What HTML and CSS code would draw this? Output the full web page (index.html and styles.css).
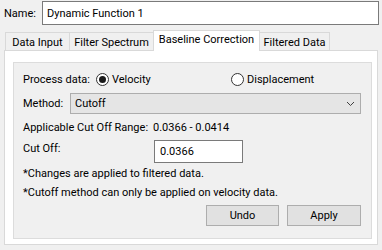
FILE: index.html
```html
<!DOCTYPE html>
<html lang="en">
<head>
    <meta charset="UTF-8">
    <title>Dynamic Function</title>
    <link rel="stylesheet" href="styles.css">
</head>
<body>
    <div class="name-row">
        <span class="name-label">Name:</span>
        <div class="textbox name-box">Dynamic Function 1</div>
    </div>

    <div class="tabs">
        <div class="tab tab-input">Data Input</div>
        <div class="tab tab-spectrum">Filter Spectrum</div>
        <div class="tab tab-baseline active">Baseline Correction</div>
        <div class="tab tab-filtered">Filtered Data</div>
    </div>

    <div class="tab-page">
        <div class="group">
            <div class="row process-row">
                <span class="label process-label">Process data:</span>
                <span class="radio first-radio"><span class="dot checked"></span>Velocity</span>
                <span class="radio"><span class="dot"></span>Displacement</span>
            </div>
            <div class="row method-row">
                <span class="label method-label">Method:</span>
                <div class="combo">
                    <span>Cutoff</span>
                    <svg width="9" height="6" viewBox="0 0 9 6"><polyline points="1,1 4.5,4.5 8,1" fill="none" stroke="#404040" stroke-width="1"/></svg>
                </div>
            </div>
            <div class="row range-row">
                <span class="label range-label">Applicable Cut Off Range:</span>
                <span>0.0366 - 0.0414</span>
            </div>
            <div class="row cutoff-row">
                <span class="label cutoff-label">Cut Off:</span>
                <div class="textbox cutoff-box">0.0366</div>
            </div>
            <p class="note note-first">*Changes are applied to filtered data.</p>
            <p class="note">*Cutoff method can only be applied on velocity data.</p>
            <div class="buttons">
                <button class="btn undo">Undo</button>
                <button class="btn apply">Apply</button>
            </div>
        </div>
    </div>
</body>
</html>
```

FILE: styles.css
```css
body {
    margin: 0;
    width: 382px;
    height: 250px;
    overflow: hidden;
    background-color: #f0f0f0;
    font-family: Roboto, "Liberation Sans", sans-serif;
    font-size: 11px;
    color: #000;
}

.name-row {
    display: flex;
    align-items: center;
    padding: 1px 3px 0 4px;
}

.name-label {
    width: 38px;
}

.textbox {
    box-sizing: border-box;
    background: #fff;
    border: 1px solid #7a7a7a;
    display: flex;
    align-items: center;
}

.name-box {
    flex: 1;
    height: 24px;
    padding-left: 4px;
}

.tabs {
    display: flex;
    align-items: flex-end;
    height: 20px;
    margin: 5px 0 0 5px;
}

.tab {
    box-sizing: border-box;
    height: 18px;
    line-height: 16px;
    padding-top: 2px;
    text-align: center;
    border: 1px solid #d9d9d9;
    border-bottom: none;
    margin-right: -1px;
    background: #f0f0f0;
    white-space: nowrap;
}

.tab.active {
    height: 21px;
    padding-top: 1px;
    background: #fff;
    position: relative;
    z-index: 1;
    margin-bottom: -1px;
}

.tab-input { width: 65px; }
.tab-spectrum { width: 85px; }
.tab-baseline { width: 107px; }
.tab-filtered { width: 71px; }

.tab-page {
    box-sizing: border-box;
    margin: 0 4px 0 4px;
    width: 374px;
    height: 195px;
    border: 1px solid #d9d9d9;
    background: #fff;
    padding: 11px 5px 5px 8px;
}

.group {
    box-sizing: border-box;
    height: 100%;
    border: 1px solid #dcdcdc;
    background: #f0f0f0;
    padding: 0 10px 0 9px;
}

.row {
    display: flex;
    align-items: center;
    white-space: nowrap;
}

.process-row {
    height: 16px;
    margin-top: 8px;
}

.process-label {
    width: 73px;
}

.radio {
    display: flex;
    align-items: center;
}

.first-radio {
    width: 135px;
}

.dot {
    box-sizing: border-box;
    width: 13px;
    height: 13px;
    border: 1px solid #333;
    border-radius: 50%;
    background: #fff;
    margin-right: 3px;
    display: flex;
    align-items: center;
    justify-content: center;
}

.dot.checked::after {
    content: "";
    width: 7px;
    height: 7px;
    border-radius: 50%;
    background: #1a1a1a;
}

.method-row {
    margin-top: 6px;
}

.method-label {
    width: 47px;
}

.combo {
    box-sizing: border-box;
    flex: 1;
    height: 21px;
    border: 1px solid #adadad;
    background: #e5e5e5;
    display: flex;
    align-items: center;
    justify-content: space-between;
    padding: 0 5px 0 4px;
}

.range-row {
    height: 16px;
    margin-top: 5px;
}

.range-label {
    width: 130px;
}

.cutoff-row {
    margin-top: 5px;
    align-items: flex-start;
}

.cutoff-label {
    width: 131px;
    padding-top: 2px;
}

.cutoff-box {
    width: 89px;
    height: 23px;
    padding-left: 5px;
}

.note {
    margin: 3px 0 0;
    height: 16px;
    line-height: 16px;
    white-space: nowrap;
}

.buttons {
    display: flex;
    justify-content: flex-end;
    gap: 8px;
    margin-top: 4px;
}

.btn {
    box-sizing: border-box;
    height: 21px;
    border: 1px solid #adadad;
    background: #e1e1e1;
    font-family: inherit;
    font-size: 11px;
    color: #000;
    padding: 0;
}

.undo {
    width: 73px;
}

.apply {
    width: 74px;
}
```
